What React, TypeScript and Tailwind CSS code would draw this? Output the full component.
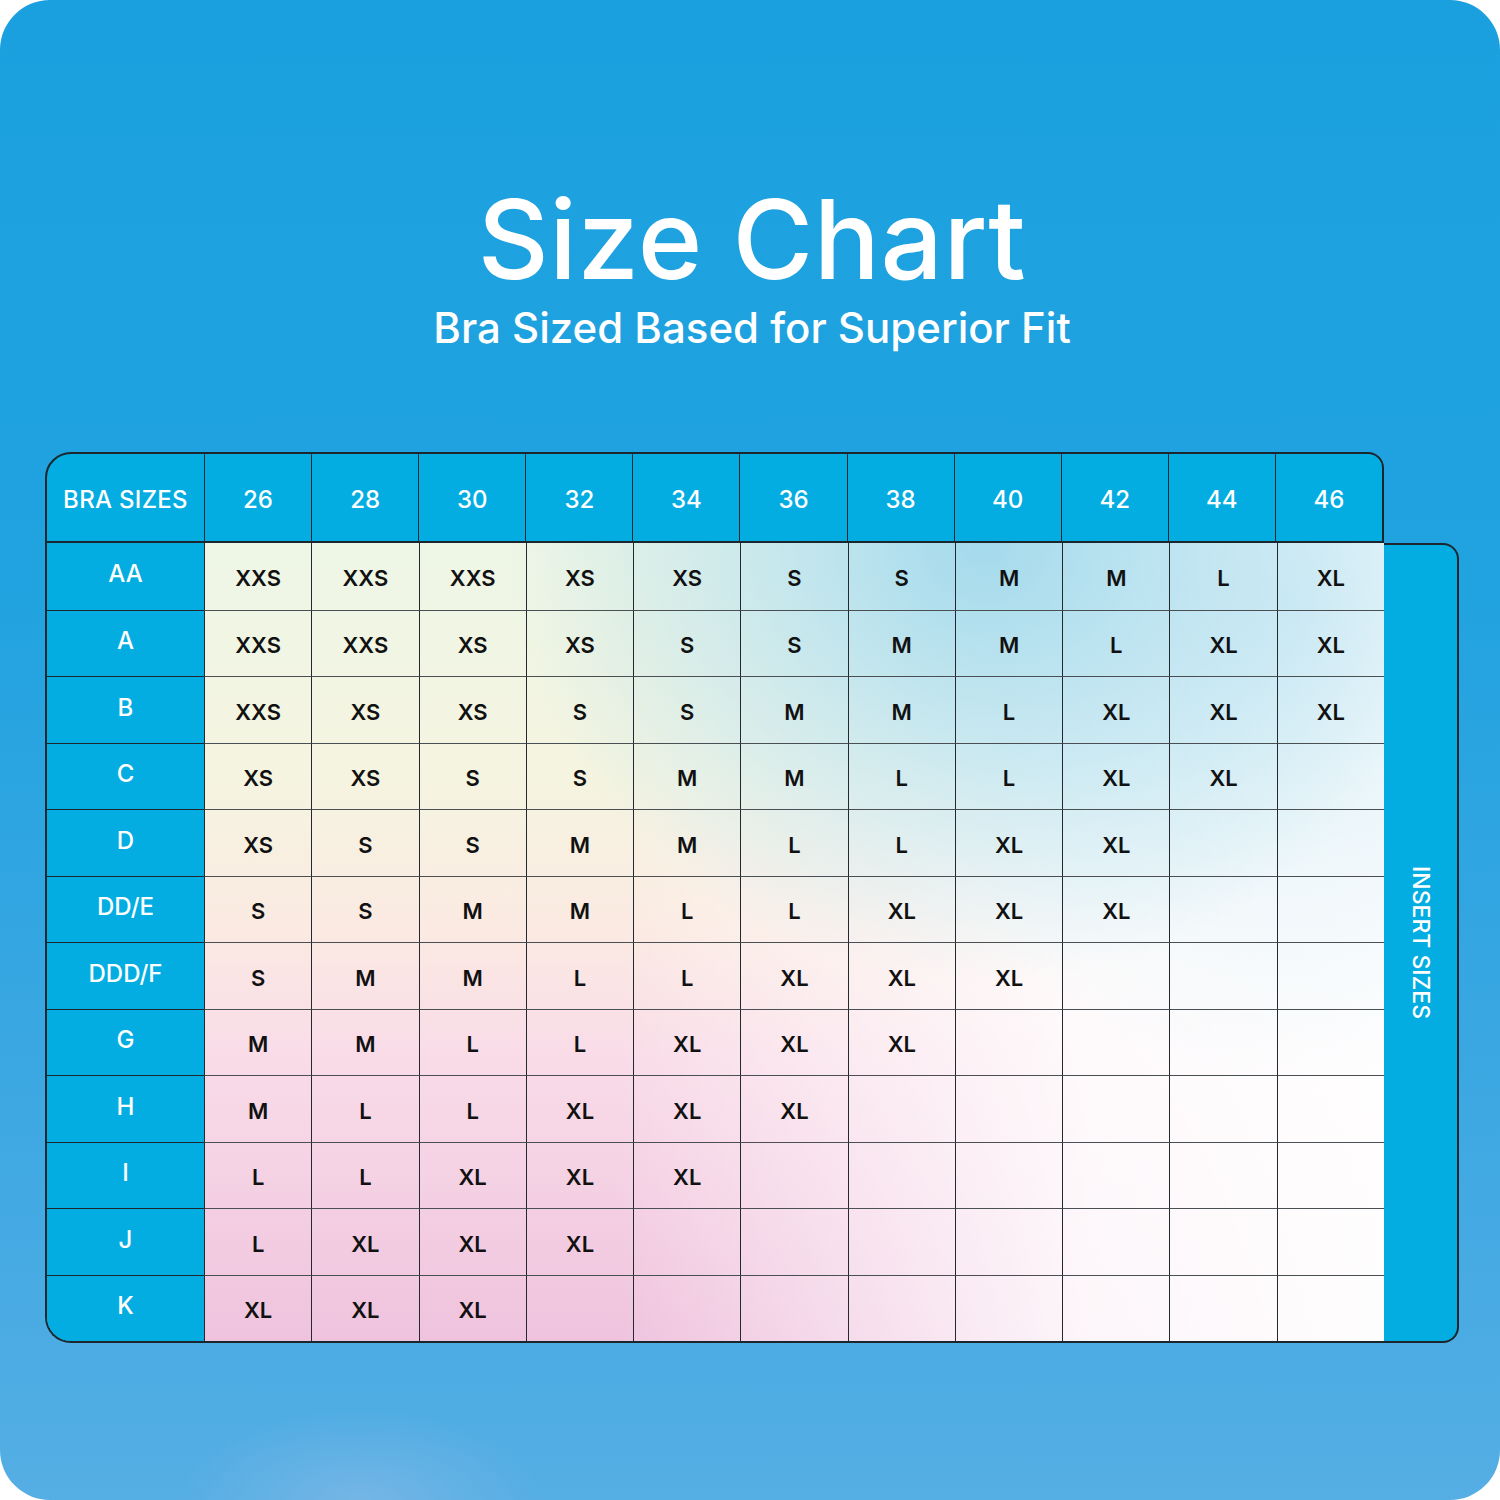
const COLS = ["26", "28", "30", "32", "34", "36", "38", "40", "42", "44", "46"];

const ROWS: { cup: string; sizes: string[] }[] = [
  { cup: "AA", sizes: ["XXS", "XXS", "XXS", "XS", "XS", "S", "S", "M", "M", "L", "XL"] },
  { cup: "A", sizes: ["XXS", "XXS", "XS", "XS", "S", "S", "M", "M", "L", "XL", "XL"] },
  { cup: "B", sizes: ["XXS", "XS", "XS", "S", "S", "M", "M", "L", "XL", "XL", "XL"] },
  { cup: "C", sizes: ["XS", "XS", "S", "S", "M", "M", "L", "L", "XL", "XL"] },
  { cup: "D", sizes: ["XS", "S", "S", "M", "M", "L", "L", "XL", "XL"] },
  { cup: "DD/E", sizes: ["S", "S", "M", "M", "L", "L", "XL", "XL", "XL"] },
  { cup: "DDD/F", sizes: ["S", "M", "M", "L", "L", "XL", "XL", "XL"] },
  { cup: "G", sizes: ["M", "M", "L", "L", "XL", "XL", "XL"] },
  { cup: "H", sizes: ["M", "L", "L", "XL", "XL", "XL"] },
  { cup: "I", sizes: ["L", "L", "XL", "XL", "XL"] },
  { cup: "J", sizes: ["L", "XL", "XL", "XL"] },
  { cup: "K", sizes: ["XL", "XL", "XL"] },
];

export default function App() {
  return (
    <div className="h-[1500px] w-[1500px] bg-white font-['Inter','Liberation_Sans',sans-serif]">
      <div className="flex h-full w-full flex-col rounded-[50px] bg-[image:radial-gradient(ellipse_12%_6%_at_24%_100%,rgba(175,195,232,0.35),rgba(175,195,232,0)),linear-gradient(180deg,#1ba0df_0%,#21a3e0_40%,#3aa7e2_70%,#55aee4_100%)] pl-[45px] pt-[184px]">
        {/* Heading */}
        <div className="flex w-[1414px] flex-col items-center text-white">
          <h1 className="text-[110px] font-medium leading-none tracking-[0.5px]">Size Chart</h1>
          <p className="mt-[13px] text-[42px] font-medium leading-none">Bra Sized Based for Superior Fit</p>
        </div>

        {/* Header row */}
        <div className="mt-[103px] flex h-[91px] w-[1339px] rounded-tl-[26px] rounded-tr-[16px] border-2 border-[#1c262d] bg-[#03ade1] pt-[4px] text-[24px] font-medium text-white">
          <div className="flex w-[157px] shrink-0 items-center justify-center tracking-[0.3px]">BRA SIZES</div>
          <div className="grid flex-1 grid-cols-11">
            {COLS.map((c) => (
              <div key={c} className="-mt-[4px] flex items-center justify-center border-l border-[#1c262d] pt-[4px]">
                {c}
              </div>
            ))}
          </div>
        </div>

        <div className="flex">
          {/* Body */}
          <div className="flex h-[800px] w-[1339px] overflow-hidden rounded-bl-[26px] border-b-2 border-l-2 border-[#1c262d]">
            <div className="grid w-[157px] shrink-0 grid-rows-[repeat(12,1fr)] bg-[#03ade1] text-[24px] font-medium text-white">
              {ROWS.map((r, i) => (
                <div
                  key={r.cup}
                  className={`flex items-center justify-center pb-[4px] ${i > 0 ? "border-t border-[#1c262d]" : ""}`}
                >
                  {r.cup}
                </div>
              ))}
            </div>
            <div className="grid flex-1 grid-cols-11 grid-rows-[repeat(12,1fr)] bg-[image:radial-gradient(ellipse_40%_55%_at_66%_0%,rgba(164,218,236,1),rgba(164,218,236,0)),radial-gradient(ellipse_35%_60%_at_92%_8%,rgba(214,237,246,0.85),rgba(214,237,246,0)),linear-gradient(90deg,rgba(255,255,255,0)_35%,rgba(255,255,255,0.85)_75%,rgba(255,255,255,0.97)_100%),linear-gradient(180deg,#eef6e6_0%,#f5f4e0_30%,#fbeae2_48%,#f9dce8_64%,#efc3de_100%)] text-[22px] font-semibold text-[#111]">
              {ROWS.map((r, i) =>
                COLS.map((c, j) => (
                  <div
                    key={`${r.cup}-${c}`}
                    className={`flex items-center justify-center border-l border-[#23292e] pt-[5px] ${i > 0 ? "border-t border-t-[#4a4f54]" : ""}`}
                  >
                    {r.sizes[j] ?? ""}
                  </div>
                )),
              )}
            </div>
          </div>

          {/* Insert sizes band */}
          <div className="flex h-[800px] w-[75px] items-center justify-center rounded-r-[16px] border-y-2 border-r-2 border-[#1c262d] bg-[#03ade1]">
            <span className="text-[23px] font-medium text-white [writing-mode:vertical-rl]">INSERT SIZES</span>
          </div>
        </div>
      </div>
    </div>
  );
}
